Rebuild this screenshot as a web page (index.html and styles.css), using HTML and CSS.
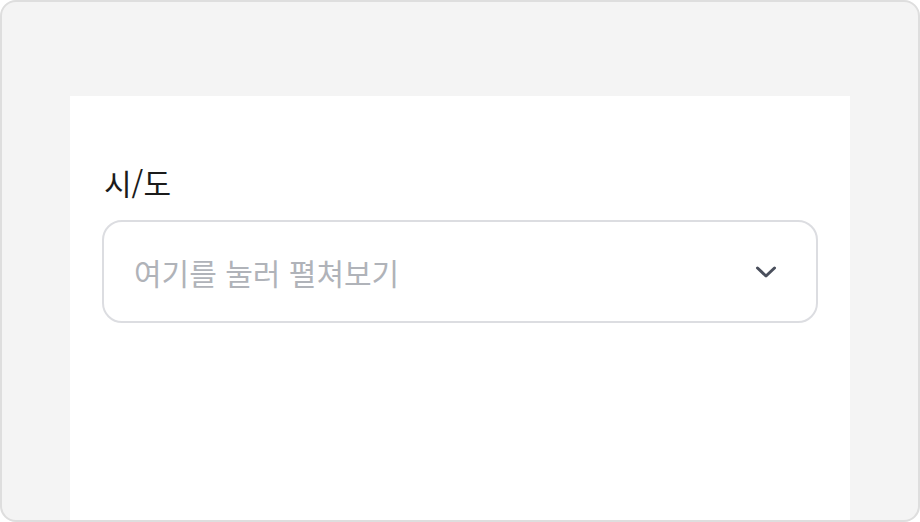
FILE: index.html
```html
<!DOCTYPE html>
<html lang="ko">
<head>
  <meta charset="UTF-8" />
  <meta name="viewport" content="width=device-width, initial-scale=1.0"/>
  <title>시/도 선택</title>
  <link rel="stylesheet" href="styles.css">
</head>
<body>
  <div class="frame">
    <div class="panel">
      <label class="field-label" for="sido">시/도</label>
      <div class="select" id="sido">
        <span class="placeholder">여기를 눌러 펼쳐보기</span>
        <svg class="chevron" width="22" height="12" viewBox="0 0 22 12">
          <path d="M2.5 2 L11 10 L19.5 2" fill="none" stroke="#4a4f5c" stroke-width="3" stroke-linecap="round" stroke-linejoin="round"/>
        </svg>
      </div>
    </div>
  </div>
</body>
</html>
```

FILE: styles.css
```css
body {
  margin: 0;
  font-family: "Noto Sans CJK KR", "Noto Sans", sans-serif;
  background: #fff;
}
.frame {
  box-sizing: border-box;
  width: 920px;
  height: 522px;
  padding: 94px 68px 0;
  background: #f4f4f4;
  border: 2px solid #dedede;
  border-radius: 16px;
  display: flex;
}
.panel {
  flex: 1;
  background: #fff;
  padding: 67px 32px 0;
  display: flex;
  flex-direction: column;
}
.field-label {
  font-size: 30px;
  line-height: 38px;
  color: #1b1b1b;
  margin-bottom: 19px;
  padding-left: 2px;
}
.select {
  box-sizing: border-box;
  height: 103px;
  border: 2px solid #dcdde1;
  border-radius: 20px;
  padding: 0 39px 0 30px;
  display: flex;
  align-items: center;
  justify-content: space-between;
}
.placeholder {
  font-size: 30px;
  color: #b0b3b9;
}
```
